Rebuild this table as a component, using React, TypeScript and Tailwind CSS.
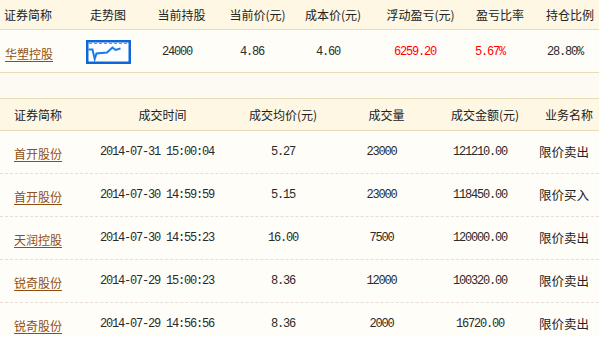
const cn = { fontFamily: '"Noto Sans CJK SC", "Liberation Sans", sans-serif' };
const mono = { fontFamily: '"Liberation Mono", "Noto Sans CJK SC", monospace' };

const Spark = () => (
  <svg width="45" height="24" viewBox="0 0 45 24" className="block">
    <rect x="1.25" y="1.25" width="42.5" height="21.5" fill="#ffffff" stroke="#0f66d9" strokeWidth="2.5" />
    <line x1="3" y1="3.5" x2="42" y2="3.5" stroke="#4f9cec" strokeWidth="1" strokeDasharray="3 2" />
    <polyline
      points="2.5,9.5 6.5,9.5 8.7,19 10.5,13.5 21,12.5 26.5,7.5 29.5,10 34.5,8.5"
      fill="none"
      stroke="#1b7be6"
      strokeWidth="2"
    />
  </svg>
);

const holdings = {
  name: "华塑控股",
  shares: "24000",
  price: "4.86",
  cost: "4.60",
  pnl: "6259.20",
  ratio: "5.67%",
  weight: "28.80%",
};

const trades = [
  { name: "首开股份", time: "2014-07-31 15:00:04", avg: "5.27", vol: "23000", amt: "121210.00", type: "限价卖出" },
  { name: "首开股份", time: "2014-07-30 14:59:59", avg: "5.15", vol: "23000", amt: "118450.00", type: "限价买入" },
  { name: "天润控股", time: "2014-07-30 14:55:23", avg: "16.00", vol: "7500", amt: "120000.00", type: "限价卖出" },
  { name: "锐奇股份", time: "2014-07-29 15:00:23", avg: "8.36", vol: "12000", amt: "100320.00", type: "限价卖出" },
  { name: "锐奇股份", time: "2014-07-29 14:56:56", avg: "8.36", vol: "2000", amt: "16720.00", type: "限价卖出" },
];

const Num = ({ children, red }: { children: React.ReactNode; red?: boolean }) => (
  <span className={`text-[12px] tracking-[-1.2px] ${red ? "text-[#ff0000]" : "text-[#2a2a2a]"}`} style={mono}>
    {children}
  </span>
);

const Link = ({ children }: { children: React.ReactNode }) => (
  <span className="text-[12px] text-[#8f4f12] underline underline-offset-2" style={cn}>
    {children}
  </span>
);

export default function App() {
  return (
    <div className="w-[599px] h-[337px] overflow-hidden bg-[#fffdf8] text-[#222222]" style={cn}>
      {/* holdings */}
      <div className="flex h-[30px] items-center bg-[#fdf7e4] border-b border-[#e6dcb8] text-[12px] whitespace-nowrap">
        <div className="w-[72px] pl-[4px]">证券简称</div>
        <div className="w-[72px] flex justify-center">走势图</div>
        <div className="w-[66px] flex justify-center pl-[9px]">当前持股</div>
        <div className="w-[84px] flex justify-center pl-[11px]">当前价(元)</div>
        <div className="w-[72px] flex justify-center pl-[6px]">成本价(元)</div>
        <div className="w-[98px] flex justify-center pl-[11px]">浮动盈亏(元)</div>
        <div className="w-[52px] flex justify-center pl-[20px]">盈亏比率</div>
        <div className="w-[83px] flex justify-center pl-[25px]">持仓比例</div>
      </div>
      <div className="flex h-[43px] items-center border-b border-[#e6dcb8] whitespace-nowrap">
        <div className="w-[72px] pl-[5px] pt-[2px]"><Link>{holdings.name}</Link></div>
        <div className="w-[72px] flex justify-center pt-[1px]"><Spark /></div>
        <div className="w-[66px] flex justify-center pt-[2px]"><Num>{holdings.shares}</Num></div>
        <div className="w-[84px] flex justify-center pt-[2px]"><Num>{holdings.price}</Num></div>
        <div className="w-[72px] flex justify-center pr-[4px] pt-[2px]"><Num>{holdings.cost}</Num></div>
        <div className="w-[98px] flex justify-center pt-[2px]"><Num red>{holdings.pnl}</Num></div>
        <div className="w-[52px] flex justify-center pt-[2px]"><Num red>{holdings.ratio}</Num></div>
        <div className="w-[83px] flex justify-center pl-[15px] pt-[2px]"><Num>{holdings.weight}</Num></div>
      </div>
      <div className="h-[26px] bg-[#fdfbf1] border-b border-[#e6dcb8]" />

      {/* trades */}
      <div className="flex h-[32px] items-center bg-[#fdf7e4] border-b border-[#e6dcb8] text-[12px] whitespace-nowrap">
        <div className="w-[80px] pl-[14px]">证券简称</div>
        <div className="w-[154px] flex justify-center pl-[11px]">成交时间</div>
        <div className="w-[98px] flex justify-center">成交均价(元)</div>
        <div className="w-[99px] flex justify-center pl-[10px]">成交量</div>
        <div className="w-[98px] flex justify-center pl-[10px]">成交金额(元)</div>
        <div className="w-[70px] flex justify-center pl-[10px]">业务名称</div>
      </div>
      {trades.map((t, i) => (
        <div key={i} className="flex h-[43px] items-center border-b border-dashed border-[#e8ddd6] whitespace-nowrap">
          <div className="w-[80px] pl-[14px]"><Link>{t.name}</Link></div>
          <div className="w-[154px] flex justify-center"><Num>{t.time}</Num></div>
          <div className="w-[98px] flex justify-center"><Num>{t.avg}</Num></div>
          <div className="w-[99px] flex justify-center"><Num>{t.vol}</Num></div>
          <div className="w-[98px] flex justify-center"><Num>{t.amt}</Num></div>
          <div className="w-[70px] flex justify-center text-[12.5px] text-[#222222]">{t.type}</div>
        </div>
      ))}
    </div>
  );
}
